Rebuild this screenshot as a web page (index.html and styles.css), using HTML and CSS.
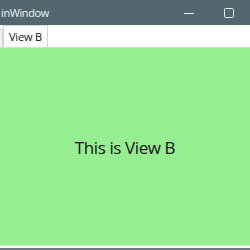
FILE: index.html
```html
<!DOCTYPE html>
<html lang="en">
<head>
    <meta charset="UTF-8">
    <title>MainWindow</title>
    <link rel="stylesheet" href="styles.css">
</head>
<body>
    <div class="window">
        <!-- Title bar -->
        <div class="title-bar">
            <span class="title">inWindow</span>
            <div class="caption-buttons">
                <span class="caption-btn">
                    <svg width="10" height="10" viewBox="0 0 10 10"><path d="M0 5.5H10" stroke="#e8eef0" stroke-width="1"/></svg>
                </span>
                <span class="caption-btn">
                    <svg width="10" height="10" viewBox="0 0 10 10"><rect x="0.5" y="0.5" width="9" height="9" rx="1" fill="none" stroke="#e8eef0" stroke-width="1"/></svg>
                </span>
            </div>
        </div>

        <!-- Tabs -->
        <div class="tab-strip">
            <div class="tab tab-hidden"></div>
            <div class="tab tab-active">View B</div>
        </div>

        <!-- Content -->
        <div class="view">
            <span class="view-text">This is View B</span>
        </div>
        <div class="view-foot"></div>
    </div>
</body>
</html>
```

FILE: styles.css
```css
* {
    margin: 0;
    padding: 0;
    box-sizing: border-box;
}

body {
    font-family: "Open Sans", "Noto Sans", sans-serif;
    width: 250px;
    height: 250px;
    overflow: hidden;
    background: #6b7b80;
}

.window {
    display: flex;
    flex-direction: column;
    height: 248px;
    background: white;
}

.title-bar {
    height: 25px;
    background: #526770;
    color: #eef2f3;
    display: flex;
    align-items: center;
    justify-content: space-between;
}

.title {
    font-size: 11px;
    letter-spacing: -0.4px;
    margin-left: 1px;
    white-space: nowrap;
}

.caption-buttons {
    display: flex;
    margin-right: 1px;
}

.caption-btn {
    width: 40px;
    height: 25px;
    display: flex;
    align-items: center;
    justify-content: center;
}

.tab-strip {
    height: 23px;
    display: flex;
    align-items: flex-end;
    border-bottom: 1px solid #d8dcd8;
    background: white;
}

.tab {
    height: 21px;
    border: 1px solid #d4d4d4;
    border-bottom: none;
    font-size: 11px;
    letter-spacing: -0.2px;
    color: #111;
    display: flex;
    align-items: center;
}

.tab-hidden {
    width: 3px;
    height: 18px;
    border-left: none;
    background: #f0f0f0;
}

.tab-active {
    padding: 0 5px;
    height: 22px;
    background: white;
}

.view {
    flex: 1;
    background: #95ee90;
    display: flex;
    align-items: center;
    justify-content: center;
}

.view-text {
    font-size: 17px;
    letter-spacing: -0.4px;
    color: #111;
    margin-top: 2px;
}

.view-foot {
    height: 3px;
    background: linear-gradient(#c4f5c0 0 1px, white 1px);
}
```
